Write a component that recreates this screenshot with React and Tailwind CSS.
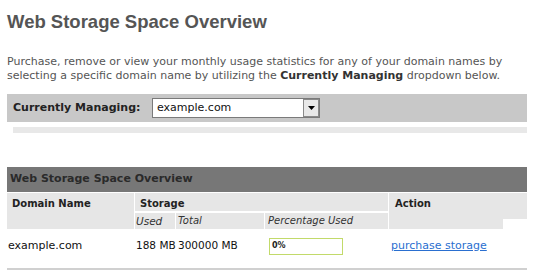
export default function App() {
  const v = { fontFamily: '"DejaVu Sans", Verdana, sans-serif' };
  return (
    <div className="w-[536px] h-[273px] bg-white overflow-hidden px-[7px] pt-[10px]" style={v}>
      <h1
        className="text-[18.5px] leading-[24px] font-bold text-[#555555] m-0"
        style={{ fontFamily: '"Liberation Sans", Arial, sans-serif' }}
      >
        Web Storage Space Overview
      </h1>
      <p className="mt-[21px] text-[11px] leading-[14px] text-[#555555] whitespace-nowrap">
        Purchase, remove or view your monthly usage statistics for any of your domain names by
        <br />
        selecting a specific domain name by utilizing the <b className="text-[#333333]">Currently Managing</b> dropdown below.
      </p>
      <div className="mt-[11px] w-[520px] h-[28px] bg-[#c8c8c8] flex items-center pl-[6px]">
        <span className="text-[11px] font-bold text-[#222222] w-[139px]">Currently Managing:</span>
        <div className="w-[168px] h-[20px] bg-white border border-[#7a7a7a] flex items-center">
          <span className="flex-1 pl-[4px] text-[11px] text-[#111111]">example.com</span>
          <div className="w-[16px] h-[18px] border border-[#8a8a8a] bg-[#e8e8e8] flex items-center justify-center">
            <svg width="7" height="4" viewBox="0 0 7 4">
              <path d="M0 0H7L3.5 4Z" fill="#000" />
            </svg>
          </div>
        </div>
      </div>
      <div className="ml-[6px] mt-[5px] w-[514px] h-[6px] bg-[#e8e8e8]" />
      <div className="mt-[34px] w-[520px]">
        <div className="h-[25px] bg-[#777777] flex items-center pl-[3px] text-[11px] font-bold text-[#2a2a2a]">
          Web Storage Space Overview
        </div>
        <div className="mt-[1px] grid grid-cols-[127px_40px_88px_123px_138px] gap-x-[1px] gap-y-[2px] bg-white text-[10px] text-[#222222]">
          <div className="row-span-2 bg-[#e6e6e6] font-bold pl-[5px] pt-[3px]">Domain Name</div>
          <div className="col-span-3 h-[18px] bg-[#e6e6e6] font-bold pl-[5px] pt-[3px]">Storage</div>
          <div className="row-span-2 flex flex-col">
            <div className="h-[26px] bg-[#e6e6e6] font-bold pl-[6px] pt-[3px]">Action</div>
            <div className="flex-1 w-[114px] bg-[#e6e6e6]" />
          </div>
          <div className="h-[16px] bg-[#e6e6e6] italic pl-[1px] leading-[16px] text-[#333333] text-[10.5px]">Used</div>
          <div className="h-[16px] bg-[#e6e6e6] italic pl-[2px] leading-[16px] text-[#333333]">Total</div>
          <div className="h-[16px] bg-[#e6e6e6] italic pl-[3px] leading-[16px] text-[#333333]">Percentage Used</div>
        </div>
        <div className="grid grid-cols-[128px_41px_89px_124px_138px] h-[34px] items-center text-[11px] text-[#111111] whitespace-nowrap">
          <div className="pl-[1px]">example.com</div>
          <div className="pl-[1px] text-[10.5px]">188 MB</div>
          <div className="pl-[2px] text-[10.5px]">300000 MB</div>
          <div className="pl-[4px]">
            <div className="w-[74px] h-[17px] border-[1.5px] border-[#c2da6a] bg-white text-[8px] font-bold pl-[2px] leading-[13px] text-[#222222]">
              0%
            </div>
          </div>
          <div className="pl-[2px]">
            <a href="#" className="text-[#2a6fd0] underline">purchase storage</a>
          </div>
        </div>
        <div className="mt-[5px] h-[2px] bg-[#d0d0d0]" />
      </div>
    </div>
  );
}
